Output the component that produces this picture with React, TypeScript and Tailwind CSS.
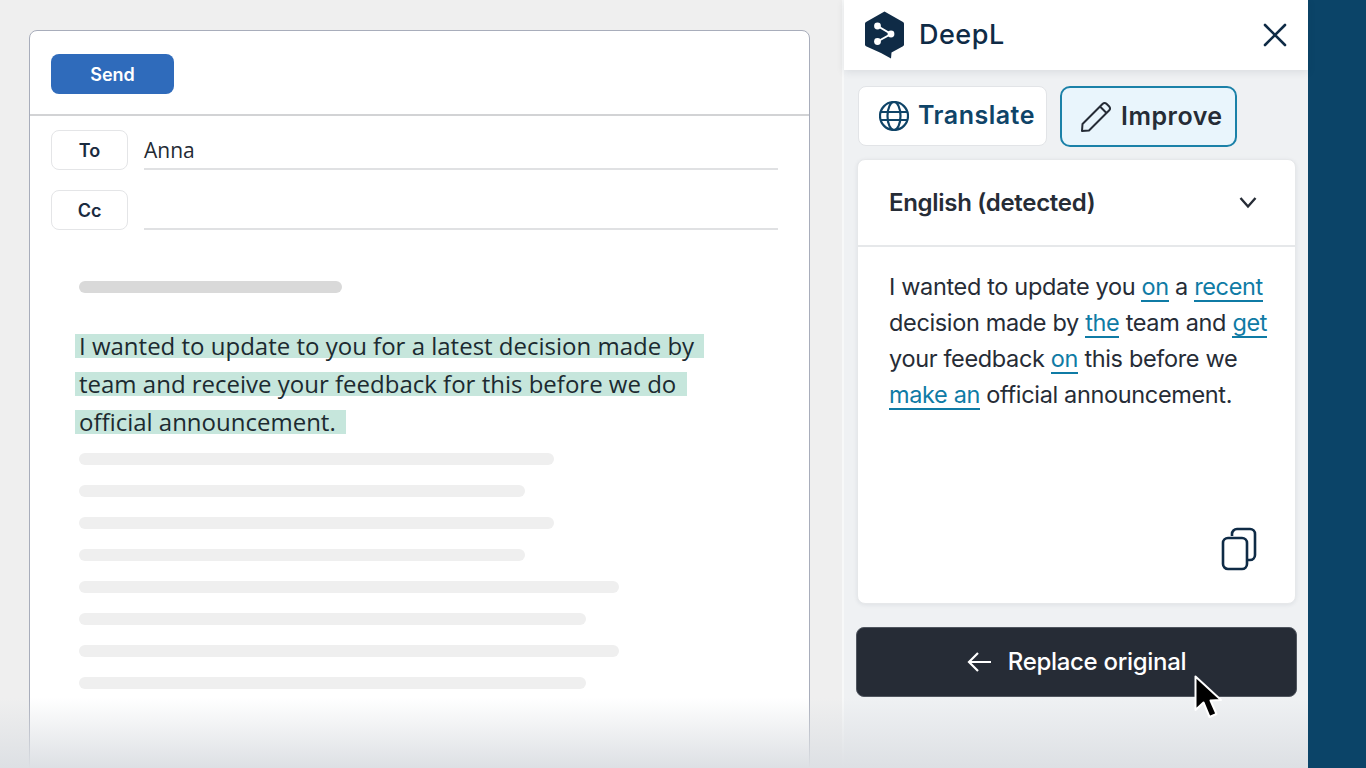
import React from "react";

const sans = "font-['Inter','Liberation_Sans',sans-serif]";
const skeleton: [number, string][] = [
  [475, "mb-5"], [446, "mb-5"], [475, "mb-5"], [446, "mb-5"], [540, "mb-5"], [507, "mb-5"], [540, "mb-5"], [507, ""],
];

function L({ children }: { children: React.ReactNode }) {
  return <span className="text-[#0f7ba5] border-b-2 border-[#0f7ba5] pb-[1px] leading-none inline-block">{children}</span>;
}

function Logo() {
  return (
    <svg width="41" height="48" viewBox="0 0 41 48" className="shrink-0">
      <path d="M20.5 0.5 L39 11 a2 2 0 0 1 1 1.8 V33.5 a2 2 0 0 1 -1 1.8 L27.5 41.5 L27 47.5 L17 42 L2 35.3 a2 2 0 0 1 -1 -1.8 V12.8 a2 2 0 0 1 1 -1.8 Z" fill="#0f2b46" />
      <path d="M13.5 15 L27 23 L13.5 30.5" fill="none" stroke="#fff" strokeWidth="2" />
      <circle cx="13.5" cy="15" r="3.4" fill="#fff" />
      <circle cx="27" cy="23" r="3.4" fill="#fff" />
      <circle cx="13.5" cy="30.5" r="3.4" fill="#fff" />
    </svg>
  );
}

function FieldRow({ label, value, mb }: { label: string; value?: string; mb?: string }) {
  return (
    <div className={`flex ${mb ?? ""}`}>
      <div className={`w-[77px] h-10 border border-[#e4e5e7] rounded-lg flex items-center justify-center text-[18px] font-semibold text-[#1a2b3f] ${sans}`}>{label}</div>
      <div className="ml-4 w-[634px] h-10 border-b-2 border-[#e0e1e3] pt-[5px] text-[21px] leading-[30px] text-[#232a33] font-['Open_Sans',sans-serif]">{value}</div>
    </div>
  );
}

export default function App() {
  return (
    <div className="relative flex w-[1366px] h-[768px] overflow-hidden bg-[#efefef]">
      <div className="w-[842px] shrink-0 pt-[30px] pl-[29px] pr-[32px]">
        <div className="h-[760px] bg-white border border-[#a8adbb] rounded-t-lg">
          <div className="h-[85px] border-b-2 border-[#d2d3d5] pl-[21px] pt-[23px]">
            <div className={`w-[123px] h-10 bg-[#2f6bbb] rounded-lg flex items-center justify-center text-white text-[18px] font-semibold ${sans}`}>Send</div>
          </div>
          <div className="pl-[21px] pt-[14px]">
            <FieldRow label="To" value="Anna" mb="mb-5" />
            <FieldRow label="Cc" />
          </div>
          <div className="pl-[49px] pt-[51px]">
            <div className="w-[263px] h-3 rounded-full bg-[#d9d9d9]" />
            <div className="-ml-1 mt-[41px] flex flex-col gap-[14px] text-[24px] leading-[24px] text-[#1c2a30] font-['Open_Sans',sans-serif] whitespace-nowrap">
              <div className="w-fit px-1 h-6 bg-[#c6e6dc]">I wanted to update to you for a latest decision made by&nbsp;</div>
              <div className="w-fit px-1 h-6 bg-[#c6e6dc]">team and receive your feedback for this before we do&nbsp;</div>
              <div className="w-fit px-1 h-6 bg-[#c6e6dc]">official announcement.&nbsp;</div>
            </div>
            <div className="mt-[19px]">
              {skeleton.map(([w, mb], i) => (
                <div key={i} style={{ width: w }} className={`h-3 rounded-md bg-[#efefef] ${mb}`} />
              ))}
            </div>
          </div>
        </div>
      </div>

      <div className={`relative w-[466px] shrink-0 bg-[#eff1f3] border-l-2 border-[#f7f8f8] ${sans}`}>
        <div className="h-[70px] bg-white shadow-[0_2px_8px_rgba(30,40,60,0.10)] flex items-center pl-[20px] pr-[21px]">
          <Logo />
          <span className="ml-[14px] text-[27px] font-medium tracking-[0.5px] text-[#0f2b46]">DeepL</span>
          <svg width="24" height="24" viewBox="0 0 24 24" className="ml-auto" fill="none" stroke="#0f2b46" strokeWidth="2.6" strokeLinecap="round"><path d="M2 2 L22 22 M22 2 L2 22" /></svg>
        </div>
        <div className="flex pl-[14px] pt-[16px] gap-[13px]">
          <div className="w-[189px] h-[60px] bg-white border border-[#e2e4e7] rounded-lg flex items-center pl-[20px] gap-[9px]">
            <svg width="30" height="30" viewBox="0 0 30 30" fill="none" stroke="#0f4468" strokeWidth="2.2"><circle cx="15" cy="15" r="14" /><ellipse cx="15" cy="15" rx="6.5" ry="14" /><path d="M1 11 H29 M1 19 H29" /></svg>
            <span className="text-[25px] font-semibold text-[#0f4468] tracking-[0.5px]">Translate</span>
          </div>
          <div className="w-[177px] h-[61px] bg-[#e9f5fc] border-2 border-[#1b81a8] rounded-[10px] flex items-center pl-[18px] gap-[9px]">
            <svg width="32" height="32" viewBox="0 0 32 32" fill="none" stroke="#262c36" strokeWidth="2" strokeLinejoin="round"><path d="M2 30 L2.5 23 L22.5 3 a3 3 0 0 1 4.2 0 L29 5.3 a3 3 0 0 1 0 4.2 L9 29.5 Z M20 5.5 L26.5 12" /></svg>
            <span className="text-[25px] font-semibold text-[#262c36] tracking-[0.5px]">Improve</span>
          </div>
        </div>
        <div className="ml-[13px] mt-[12px] w-[439px] h-[445px] bg-white border border-[#e6e8ea] rounded-lg shadow-[0_1px_4px_rgba(30,40,60,0.08)] flex flex-col">
          <div className="h-[87px] shrink-0 border-b-2 border-[#e6e8ea] pl-[31px] pr-[38px] flex items-center justify-between">
            <span className="text-[24px] font-semibold tracking-[-0.3px] text-[#262c36]">English (detected)</span>
            <svg width="18" height="13" viewBox="0 0 18 13" fill="none" stroke="#262c36" strokeWidth="2.4"><path d="M1.5 2 L9 10.5 L16.5 2" /></svg>
          </div>
          <div className="flex-1 flex flex-col pl-[31px] pt-[22px] pr-[38px] pb-[32px]">
            <div className="text-[23.5px] leading-[36px] tracking-[-0.35px] text-[#262c36] whitespace-nowrap">
              <div>I wanted to update you <L>on</L> a <L>recent</L></div>
              <div>decision made by <L>the</L> team and <L>get</L></div>
              <div>your feedback <L>on</L> this before we</div>
              <div><L>make an</L> official announcement.</div>
            </div>
            <svg width="36" height="44" viewBox="0 0 36 44" fill="none" stroke="#0f2b46" strokeWidth="2.6" className="mt-auto ml-auto">
              <path d="M11 9 V7 a5 5 0 0 1 5 -5 H29 a5 5 0 0 1 5 5 V28 a5 5 0 0 1 -5 5 H26" />
              <rect x="2" y="11" width="24" height="31" rx="5" />
            </svg>
          </div>
        </div>
        <div className="ml-[12px] mt-[23px] w-[441px] h-[70px] bg-[#262c36] border border-[#50565f] rounded-lg flex items-center justify-center gap-[17px] text-white">
          <svg width="24" height="20" viewBox="0 0 24 20" fill="none" stroke="#fff" strokeWidth="2.2"><path d="M11 1 L2 10 L11 19 M2 10 H24" /></svg>
          <span className="text-[24px] font-medium tracking-[-0.3px]">Replace original</span>
        </div>
      </div>

      <div className="flex-1 bg-[#0b4468]" />

      <div className="absolute left-0 bottom-0 w-[1308px] h-[70px] bg-gradient-to-b from-[#dde0e400] to-[#dde0e4] pointer-events-none" />

      <svg width="30" height="46" viewBox="0 0 30 46" className="absolute left-[1193px] top-[675px]">
        <path d="M2.5 1.5 V35 L10.5 27.5 L16.5 42 L23.5 39 L17.5 25.5 L28 25 Z" fill="#000" stroke="#fff" strokeWidth="2" strokeLinejoin="round" />
      </svg>
    </div>
  );
}
